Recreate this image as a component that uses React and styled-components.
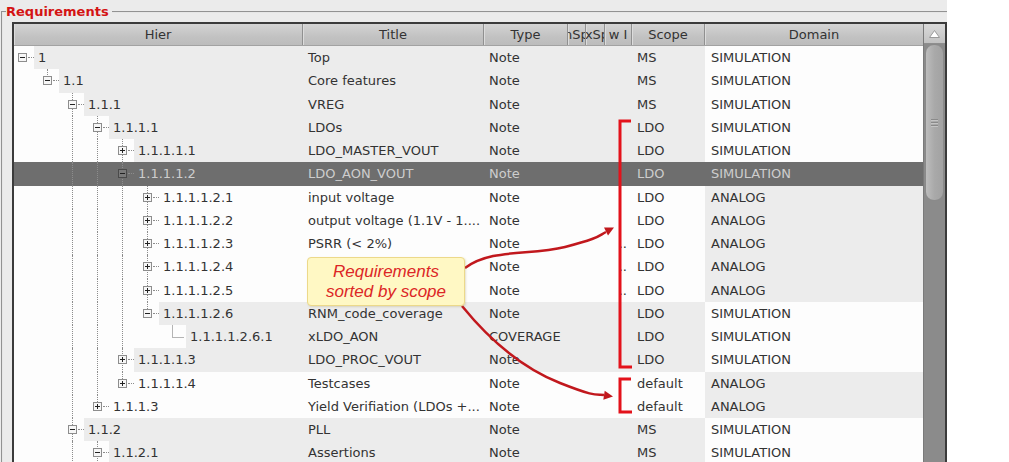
import React from "react";
import styled, { createGlobalStyle } from "styled-components";

const GlobalStyle = createGlobalStyle`
  *, *::before, *::after { box-sizing: border-box; }
  html, body { margin: 0; padding: 0; background: #ffffff; }
  body { font-family: "DejaVu Sans", "Noto Sans", sans-serif; }
`;

const COLS = "289px 181px 84px 18px 19px 27px 73px 218px";
const ROW_H = 23.25;
const GREY = "#ececec";
const WHITE = "#fdfdfd";
const SEL = "#6e6e6e";

const rows = [
  { id: "1", lvl: 0, kind: "minus", title: "Top", type: "Note", scope: "MS", domain: "SIMULATION", tone: "g" },
  { id: "1.1", lvl: 1, kind: "minus", title: "Core features", type: "Note", scope: "MS", domain: "SIMULATION", tone: "g" },
  { id: "1.1.1", lvl: 2, kind: "minus", title: "VREG", type: "Note", scope: "MS", domain: "SIMULATION", tone: "g" },
  { id: "1.1.1.1", lvl: 3, kind: "minus", title: "LDOs", type: "Note", scope: "LDO", domain: "SIMULATION", tone: "g" },
  { id: "1.1.1.1.1", lvl: 4, kind: "plus", title: "LDO_MASTER_VOUT", type: "Note", scope: "LDO", domain: "SIMULATION", tone: "g" },
  { id: "1.1.1.1.2", lvl: 4, kind: "minus", title: "LDO_AON_VOUT", type: "Note", scope: "LDO", domain: "SIMULATION", tone: "sel" },
  { id: "1.1.1.1.2.1", lvl: 5, kind: "plus", title: "input voltage", type: "Note", scope: "LDO", domain: "ANALOG", tone: "w" },
  { id: "1.1.1.1.2.2", lvl: 5, kind: "plus", title: "output voltage (1.1V - 1....", type: "Note", scope: "LDO", domain: "ANALOG", tone: "w" },
  { id: "1.1.1.1.2.3", lvl: 5, kind: "plus", title: "PSRR (< 2%)", type: "Note", scope: "LDO", domain: "ANALOG", tone: "w", more: true },
  { id: "1.1.1.1.2.4", lvl: 5, kind: "plus", title: "Line regulation", type: "Note", scope: "LDO", domain: "ANALOG", tone: "w", more: true },
  { id: "1.1.1.1.2.5", lvl: 5, kind: "plus", title: "Load regulation (< 1%)", type: "Note", scope: "LDO", domain: "ANALOG", tone: "w", more: true },
  { id: "1.1.1.1.2.6", lvl: 5, kind: "minus", title: "RNM_code_coverage", type: "Note", scope: "LDO", domain: "SIMULATION", tone: "g" },
  { id: "1.1.1.1.2.6.1", lvl: 6, kind: "leaf", title: "xLDO_AON", type: "COVERAGE", scope: "LDO", domain: "SIMULATION", tone: "g" },
  { id: "1.1.1.1.3", lvl: 4, kind: "plus", title: "LDO_PROC_VOUT", type: "Note", scope: "LDO", domain: "SIMULATION", tone: "g" },
  { id: "1.1.1.1.4", lvl: 4, kind: "plus", title: "Testcases", type: "Note", scope: "default", domain: "ANALOG", tone: "w" },
  { id: "1.1.1.3", lvl: 3, kind: "plus", title: "Yield Verifiation (LDOs +...", type: "Note", scope: "default", domain: "ANALOG", tone: "w" },
  { id: "1.1.2", lvl: 2, kind: "minus", title: "PLL", type: "Note", scope: "MS", domain: "SIMULATION", tone: "g" },
  { id: "1.1.2.1", lvl: 3, kind: "minus", title: "Assertions", type: "Note", scope: "MS", domain: "SIMULATION", tone: "g" },
];

// rows that continue below the visible part of the tree
const levels = [...rows.map((r) => r.lvl), 4, 3, 2];

function laterSibling(i, level) {
  for (let j = i + 1; j < levels.length; j++) {
    if (levels[j] < level) return false;
    if (levels[j] === level) return true;
  }
  return false;
}

const bgFor = (tone, inverted) => {
  if (tone === "sel") return SEL;
  const grey = tone === "g";
  return (inverted ? !grey : grey) ? GREY : WHITE;
};

const Page = styled.div`
  display: flex;
  width: 1009px;
  height: 462px;
  overflow: hidden;
`;

const Panel = styled.div`
  position: relative;
  width: 947px;
  height: 462px;
  background: #ebebeb;
  overflow: hidden;
  padding-left: 1px;
`;

const Group = styled.fieldset`
  margin: 4px 0 0 0;
  padding: 3px 0 0 3px;
  min-width: 0;
  border: 2px groove #e6e6e6;
  border-right: none;
  border-bottom: none;
  height: 470px;
`;

const Legend = styled.legend`
  padding: 0 3px 0 0;
  margin: 0;
  font-family: "DejaVu Sans", sans-serif;
  font-weight: 700;
  font-size: 13px;
  line-height: 15px;
  color: #d41414;
`;

const Frame = styled.div`
  display: flex;
  margin-left: 6px;
  width: 935px;
  height: 440px;
  border: 2px solid #3b3b3b;
  border-bottom: none;
  background: #ffffff;
`;

const Main = styled.div`
  display: flex;
  flex-direction: column;
  width: 909px;
  overflow: hidden;
`;

const HeaderRow = styled.div`
  display: grid;
  grid-template-columns: ${COLS};
  height: 22px;
  flex: none;
  background: linear-gradient(#d4d4d4, #c2c2c2 60%, #bcbcbc);
  border-bottom: 1px solid #a2a2a2;
`;

const HeadCell = styled.div`
  display: flex;
  align-items: center;
  justify-content: center;
  overflow: hidden;
  white-space: nowrap;
  font-size: 13px;
  color: #333333;
  border-right: 1px solid #909090;
  box-shadow: inset 1px 0 0 #dcdcdc;
  &:last-child { border-right: none; }
`;

const Body = styled.div`
  flex: 1;
  overflow: hidden;
  background: #ffffff;
`;

const Row = styled.div`
  display: grid;
  grid-template-columns: ${COLS};
  height: ${ROW_H}px;
  font-size: 13px;
  color: ${(p) => (p.$tone === "sel" ? "#cdcdcd" : "#333333")};
  background: ${(p) => (p.$tone === "sel" ? SEL : WHITE)};
`;

const Cell = styled.div`
  display: flex;
  align-items: center;
  padding-left: ${(p) => p.$pad ?? 5}px;
  overflow: hidden;
  white-space: nowrap;
  background: ${(p) => bgFor(p.$tone, p.$inv)};
  justify-content: ${(p) => (p.$right ? "flex-end" : "flex-start")};
  padding-right: ${(p) => (p.$right ? 5 : 0)}px;
`;

const HierCell = styled.div`
  display: flex;
  align-items: stretch;
  overflow: hidden;
`;

const dotted = "1px dotted #8c8c8c";

// one indent column of the tree; $v draws the sibling guide through it
const Slot = styled.span`
  position: relative;
  flex: none;
  width: 25px;
  &::before {
    content: "";
    position: absolute;
    left: 8px;
    border-left: ${dotted};
    display: ${(p) => (p.$v ? "block" : "none")};
    top: ${(p) => (p.$v === "bottom" ? "50%" : "0")};
    bottom: ${(p) => (p.$v === "top" ? "50%" : "0")};
  }
`;

const NodeSlot = styled(Slot)`
  width: 20px;
  display: flex;
  align-items: center;
  padding-left: 4px;
`;

const Trail = styled.span`
  flex: none;
  width: 6px;
  margin-left: 1px;
  height: 0;
  border-top: ${dotted};
`;

const Expander = styled.span`
  position: relative;
  z-index: 1;
  flex: none;
  width: 9px;
  height: 9px;
  border: 1px solid ${(p) => (p.$sel ? "#4a4a4a" : "#8d8d8d")};
  background: ${(p) => (p.$sel ? "#7a7a7a" : "#f6f6f6")};
  &::before {
    content: "";
    position: absolute;
    left: 1px;
    right: 1px;
    top: 3px;
    height: 1px;
    background: #222222;
  }
  &::after {
    content: "";
    position: absolute;
    top: 1px;
    bottom: 1px;
    left: 3px;
    width: 1px;
    background: #222222;
    display: ${(p) => (p.$plus ? "block" : "none")};
  }
`;

const LeafMark = styled.span`
  position: relative;
  flex: none;
  width: 22px;
  &::before {
    content: "";
    position: absolute;
    left: 8px;
    top: 0;
    height: 50%;
    border-left: 1px solid #b4b4b4;
  }
  &::after {
    content: "";
    position: absolute;
    left: 8px;
    width: 12px;
    top: 50%;
    border-top: 1px solid #b4b4b4;
  }
`;

const Label = styled.span`
  flex: 1;
  display: flex;
  align-items: center;
  padding-left: 4px;
  background: ${(p) => bgFor(p.$tone)};
`;

const ScrollCol = styled.div`
  display: flex;
  flex-direction: column;
  width: 22px;
  flex: none;
  background: #8b8b8b;
  border-left: 1px solid #7a7a7a;
`;

const UpButton = styled.div`
  height: 20px;
  flex: none;
  display: flex;
  align-items: center;
  justify-content: center;
  background: linear-gradient(#dadada, #c2c2c2);
  border-bottom: 1px solid #8e8e8e;
`;

const Thumb = styled.div`
  height: 157px;
  margin: 0 1px;
  flex: none;
  border-radius: 9px;
  border: 1px solid #8a8a8a;
  background: linear-gradient(90deg, #bdbdbd, #a9a9a9 50%, #a2a2a2);
  display: flex;
  flex-direction: column;
  align-items: center;
  justify-content: center;
  gap: 2px;
`;

const Grip = styled.span`
  width: 7px;
  height: 1px;
  background: #8a8a8a;
  box-shadow: 0 1px 0 #c4c4c4;
`;

const Overlay = styled.svg`
  position: absolute;
  left: 0;
  top: 0;
  pointer-events: none;
`;

const Callout = styled.div`
  position: absolute;
  left: 307px;
  top: 257px;
  width: 158px;
  height: 49px;
  padding-top: 4px;
  border: 1px solid #ecd98a;
  border-radius: 4px;
  background: #fff8c4;
  box-shadow: 1px 1px 2px rgba(160, 140, 60, 0.25);
  font-family: "Liberation Sans", Arial, sans-serif;
  font-style: italic;
  font-size: 17px;
  line-height: 19.5px;
  color: #dc2626;
  text-align: center;
`;

function HierTree({ row, index }) {
  const { lvl, kind, tone, id } = row;
  const slots = [];
  for (let k = 0; k < lvl; k++) {
    slots.push(<Slot key={k} $v={laterSibling(index, k) ? "full" : null} />);
  }
  const own = lvl === 0 ? null : laterSibling(index, lvl) ? "full" : "top";

  return (
    <HierCell>
      {slots}
      {kind === "leaf" ? (
        <LeafMark />
      ) : (
        <NodeSlot $v={own}>
          <Expander $plus={kind === "plus"} $sel={tone === "sel"} />
          <Trail />
        </NodeSlot>
      )}
      <Label $tone={tone}>{id}</Label>
    </HierCell>
  );
}

export default function App() {
  return (
    <>
      <GlobalStyle />
      <Page>
        <Panel>
          <Group>
            <Legend>Requirements</Legend>
            <Frame>
              <Main>
                <HeaderRow>
                  <HeadCell>Hier</HeadCell>
                  <HeadCell>Title</HeadCell>
                  <HeadCell>Type</HeadCell>
                  <HeadCell>MinSpec</HeadCell>
                  <HeadCell>MaxSpec</HeadCell>
                  <HeadCell>w I</HeadCell>
                  <HeadCell>Scope</HeadCell>
                  <HeadCell>Domain</HeadCell>
                </HeaderRow>
                <Body>
                  {rows.map((r, i) => (
                    <Row key={r.id} $tone={r.tone}>
                      <HierTree row={r} index={i} />
                      <Cell $tone={r.tone}>{r.title}</Cell>
                      <Cell $tone={r.tone}>{r.type}</Cell>
                      <Cell $tone={r.tone} />
                      <Cell $tone={r.tone} />
                      <Cell $tone={r.tone} $right>{r.more ? ".." : ""}</Cell>
                      <Cell $tone={r.tone}>{r.scope}</Cell>
                      <Cell $tone={r.tone} $inv $pad={6}>{r.domain}</Cell>
                    </Row>
                  ))}
                </Body>
              </Main>
              <ScrollCol>
                <UpButton>
                  <svg width="11" height="8" viewBox="0 0 11 8">
                    <polygon points="5.5,0.5 10.5,7.5 0.5,7.5" fill="#ffffff" stroke="#9a9a9a" strokeWidth="1" />
                  </svg>
                </UpButton>
                <Thumb>
                  <Grip />
                  <Grip />
                  <Grip />
                </Thumb>
              </ScrollCol>
            </Frame>
          </Group>

          <Overlay width="947" height="462" viewBox="0 0 947 462">
            <polyline points="631,121 620,121 620,367 632,367" fill="none" stroke="#e3121b" strokeWidth="3" />
            <polyline points="631,379 620,379 620,412 632,412" fill="none" stroke="#e3121b" strokeWidth="3" />
            <path d="M465 268 C 492 248, 530 256, 565 247 S 598 236, 606 232" fill="none" stroke="#c1181d" strokeWidth="2.5" />
            <polygon points="614,227.5 608,235.5 604,227.5" fill="#c1181d" />
            <path d="M462 306 C 488 338, 522 368, 560 383 S 596 394, 604 395" fill="none" stroke="#c1181d" strokeWidth="2.5" />
            <polygon points="613,396.5 603.3,399.7 604.7,390.7" fill="#c1181d" />
          </Overlay>
          <Callout>
            Requirements
            <br />
            sorted by scope
          </Callout>
        </Panel>
      </Page>
    </>
  );
}
